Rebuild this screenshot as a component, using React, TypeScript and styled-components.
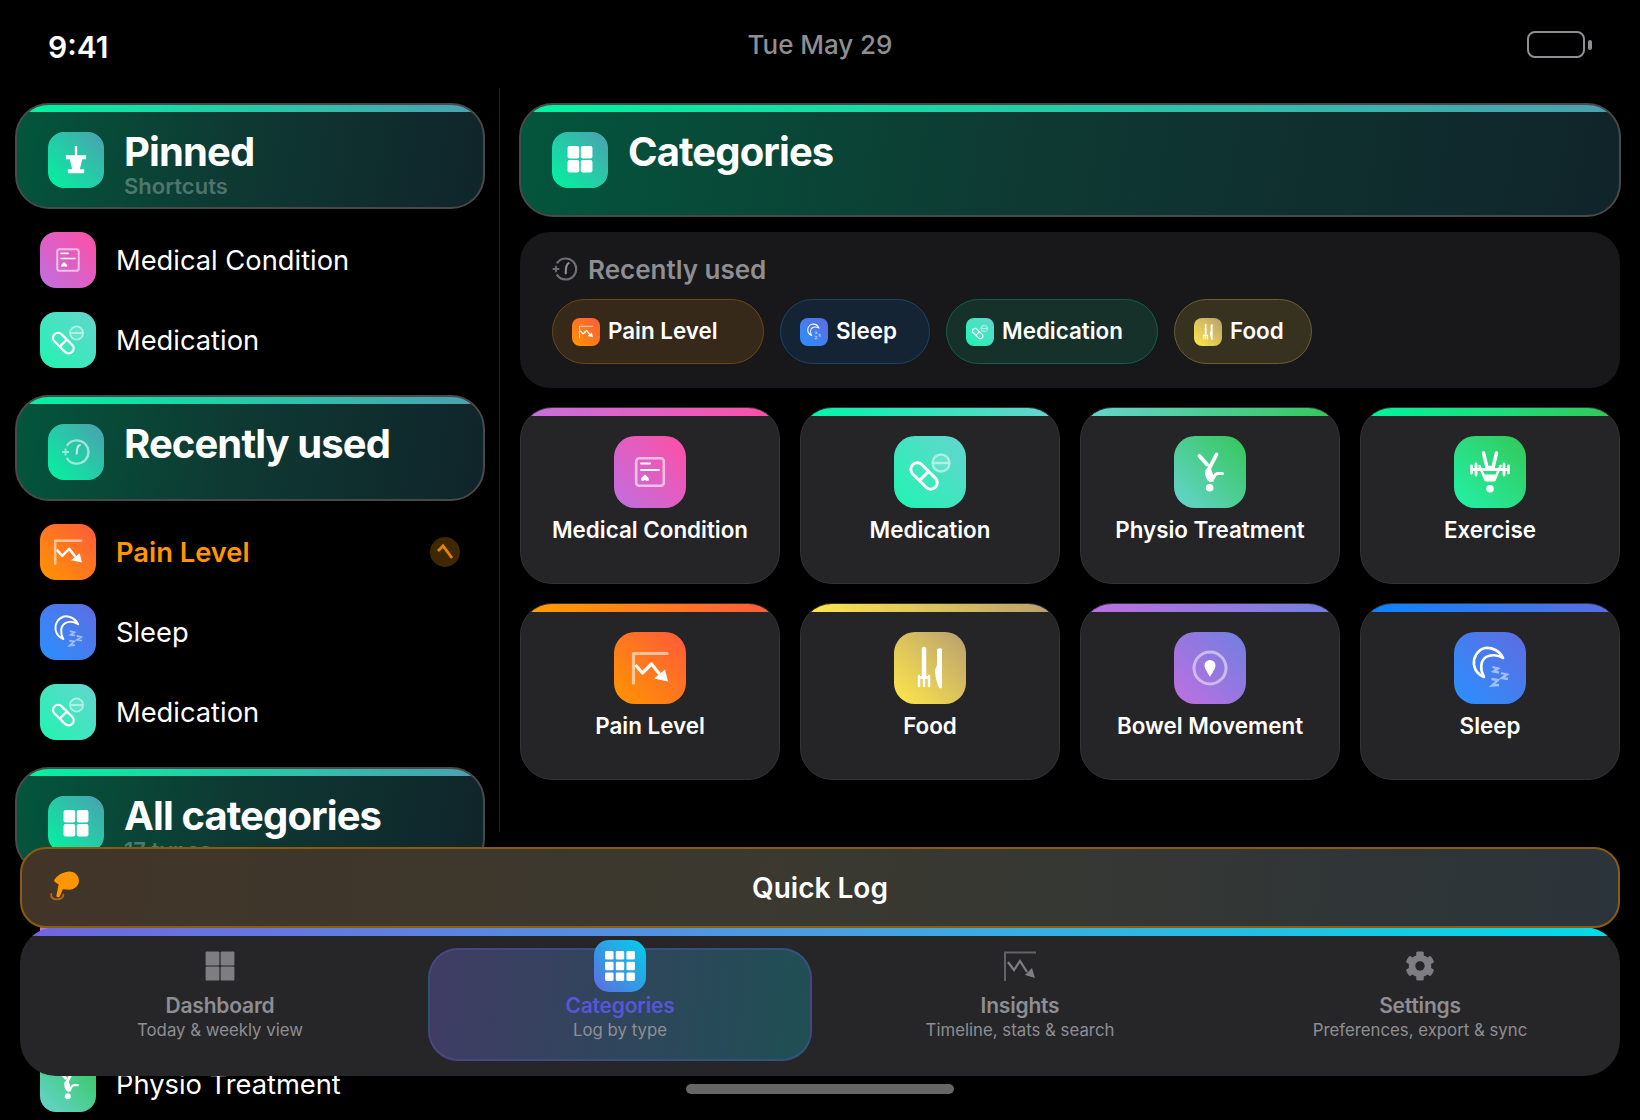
import React from 'react';
import styled, { createGlobalStyle } from 'styled-components';
import { FaCog } from 'react-icons/fa';

const GlobalStyle = createGlobalStyle`
  html, body {
    margin: 0;
    background: #000;
    font-family: Inter, "Noto Sans", sans-serif;
    color: #fff;
  }
  * { box-sizing: border-box; }
`;

const Screen = styled.div`
  position: relative;
  width: 1640px;
  height: 1120px;
  overflow: hidden;
  background: #000;
`;

const StatusBar = styled.div`
  display: grid;
  grid-template-columns: 1fr auto 1fr;
  height: 88px;
  padding: 28px 48px 0 48px;
`;

const Time = styled.div`
  font-size: 30px;
  line-height: 34px;
  font-weight: 600;
  margin-top: 2px;
`;

const DateText = styled.div`
  font-size: 26px;
  line-height: 34px;
  font-weight: 500;
  letter-spacing: -0.05px;
  color: #8e8e93;
`;

const Battery = styled.div`
  justify-self: end;
  display: flex;
  align-items: center;
  gap: 3px;
  height: 27px;
  margin-top: 3px;
`;

const BatteryBody = styled.div`
  width: 58px;
  height: 27px;
  border: 2px solid #8e8e93;
  border-radius: 8px;
`;

const BatteryCap = styled.div`
  width: 4px;
  height: 10px;
  border-radius: 2px;
  background: #8e8e93;
`;

const Columns = styled.div`
  display: flex;
  align-items: flex-start;
`;

const Sidebar = styled.div`
  width: 499px;
  flex: none;
  display: flex;
  flex-direction: column;
  gap: 27px;
  padding: 15px 14px 0 15px;
`;

const Section = styled.div`
  display: flex;
  flex-direction: column;
  gap: 24px;
`;

const HeaderCard = styled.div<{ $tall?: boolean }>`
  flex: none;
  display: flex;
  align-items: flex-start;
  gap: 20px;
  height: ${(p) => (p.$tall ? '114px' : '106px')};
  margin-bottom: ${(p) => (p.$tall ? '0' : '-1px')};
  padding: 27px 30px 0 31px;
  border: 2px solid #48494b;
  border-radius: 34px;
  background:
    linear-gradient(90deg, #00f5a0, #4d9fb0) top / 100% 7px no-repeat,
    linear-gradient(100deg, #03563c 0%, #0e3a33 45%, #10242a 100%);
`;

const HeaderText = styled.div`
  margin-top: -4px;
`;

const HeaderTitle = styled.div`
  font-size: 40px;
  line-height: 48px;
  font-weight: 700;
  letter-spacing: -0.9px;
`;

const HeaderSub = styled.div`
  margin-top: -4px;
  font-size: 22px;
  line-height: 28px;
  font-weight: 600;
  color: rgba(255, 255, 255, 0.28);
`;

const Row = styled.div`
  display: flex;
  align-items: center;
  gap: 20px;
  height: 56px;
  padding: 0 25px;
`;

const RowLabel = styled.div<{ $active?: boolean }>`
  flex: 1;
  font-size: 27.3px;
  font-weight: ${(p) => (p.$active ? 600 : 400)};
  color: ${(p) => (p.$active ? '#ff9500' : '#fff')};
`;

const SortBadge = styled.div`
  width: 30px;
  height: 30px;
  border-radius: 50%;
  background: #3f2800;
  filter: blur(0.4px);
`;

const Tile = styled.div<{ $size: number; $from: string; $to: string }>`
  flex: none;
  width: ${(p) => p.$size}px;
  height: ${(p) => p.$size}px;
  border-radius: ${(p) => Math.round(p.$size * 0.29)}px;
  background: linear-gradient(45deg, ${(p) => p.$from}, ${(p) => p.$to});
`;

const Main = styled.div`
  flex: 1;
  height: 744px;
  display: flex;
  flex-direction: column;
  padding: 15px 20px 0;
  border-left: 1px solid #1f1f21;
`;

const MainHeaderWrap = styled.div`
  display: flex;
  flex-direction: column;
  margin: 0 -1px;
`;

const RecentCard = styled.div`
  margin: 15px 0 19px;
  height: 156px;
  padding: 20px 32px 0;
  border-radius: 30px;
  background: #18181a;
`;

const RecentTitle = styled.div`
  display: flex;
  align-items: center;
  gap: 10px;
  height: 34px;
  font-size: 26px;
  font-weight: 600;
  color: #8e8e93;
`;

const ChipRow = styled.div`
  display: flex;
  gap: 16px;
  margin-top: 13px;
`;

const Chip = styled.div<{ $width: number; $bg: string; $line: string }>`
  display: flex;
  align-items: center;
  gap: 8px;
  width: ${(p) => p.$width}px;
  height: 65px;
  padding-left: 19px;
  border: 1.5px solid ${(p) => p.$line};
  border-radius: 33px;
  background: ${(p) => p.$bg};
`;

const ChipText = styled.span`
  margin-top: -3px;
  font-size: 22.4px;
  font-weight: 600;
`;

const Grid = styled.div`
  display: grid;
  grid-template-columns: repeat(4, 260px);
  grid-auto-rows: 177px;
  gap: 19px 20px;
`;

const Card = styled.div<{ $from: string; $to: string }>`
  display: flex;
  flex-direction: column;
  align-items: center;
  padding-top: 28px;
  border: 1px solid #343436;
  border-radius: 32px;
  background:
    linear-gradient(90deg, ${(p) => p.$from}, ${(p) => p.$to}) top / 100% 8px no-repeat,
    #252527;
`;

const CardLabel = styled.div`
  margin-top: 7px;
  font-size: 22.4px;
  line-height: 30px;
  font-weight: 600;
`;

const Dock = styled.div`
  position: absolute;
  left: 20px;
  right: 20px;
  top: 847px;
  display: flex;
  flex-direction: column;
`;

const QuickLog = styled.div`
  position: relative;
  z-index: 1;
  display: grid;
  grid-template-columns: 1fr auto 1fr;
  align-items: center;
  height: 81px;
  padding: 0 28px;
  border: 2px solid #8a5c12;
  border-radius: 26px;
  background: linear-gradient(95deg, #423528, #3a3930 50%, #2b343a);
  font-size: 28px;
  font-weight: 600;
`;

const HandSvg = styled.svg`
  margin: -5px 0 0 -1px;
`;

const TabBar = styled.div`
  display: grid;
  grid-template-columns: repeat(4, 1fr);
  height: 149px;
  margin-top: -1px;
  padding: 21px 0 15px;
  border-radius: 36px;
  background:
    linear-gradient(90deg, #6f66e0, #4a9ee0 50%, #00dcea) top / 100% 9px no-repeat,
    #262628;
`;

const Tab = styled.div<{ $active?: boolean }>`
  display: flex;
  flex-direction: column;
  align-items: center;
  margin: 0 8px;
  border-radius: 30px;
  border: 2px solid ${(p) => (p.$active ? 'rgba(92, 92, 210, 0.3)' : 'transparent')};
  background: ${(p) => (p.$active ? 'linear-gradient(95deg, #403c64, #1f4f54)' : 'none')};
`;

const TabIconSlot = styled.div`
  display: flex;
  align-items: center;
  justify-content: center;
  height: 31px;
  color: #7d7d82;
  filter: blur(0.5px);
`;

const ActiveIconSlot = styled(TabIconSlot)`
  filter: none;
`;

const TabLabel = styled.div<{ $active?: boolean }>`
  margin-top: 11px;
  font-size: 21px;
  line-height: 27px;
  font-weight: 600;
  letter-spacing: -0.2px;
  color: ${(p) => (p.$active ? '#5856d6' : '#8e8e93')};
`;

const TabSub = styled.div`
  font-size: 16.8px;
  line-height: 22px;
  color: #8e8e93;
`;

const ActiveTabIcon = styled.div`
  width: 52px;
  height: 52px;
  display: flex;
  align-items: center;
  justify-content: center;
  border-radius: 15px;
  background: linear-gradient(45deg, #5e6ce0, #00d0ea);
`;

const HomeBar = styled.div`
  align-self: center;
  width: 268px;
  height: 10px;
  margin-top: 8px;
  border-radius: 5px;
  background: #666;
`;

// all glyphs are drawn in a 72 box and scale with the tile
const G = ({ children }: { children: React.ReactNode }) => (
  <svg viewBox="0 0 72 72" width="100%" height="100%" fill="none" stroke="none">
    {children}
  </svg>
);

const glyphs: Record<string, React.ReactNode> = {
  medical: (
    <G>
      <rect x="22.2" y="22.2" width="27.6" height="27.6" rx="3" stroke="#fff" strokeOpacity=".6" strokeWidth="2.6" />
      <path d="M27 27.5h9M27 34h18" stroke="#fff" strokeWidth="2" strokeLinecap="round" />
      <path d="M31 38.5c2 2 4 3 4 5 0 1.500-2 2-3 1l-1-.5-1 .5c-1 1-3 .5-3-1 0-2 2-3 4-5z" fill="#fff" />
    </G>
  ),
  medication: (
    <G>
      <g transform="rotate(45 30 40)">
        <rect x="14" y="33.500" width="32" height="13" rx="6.500" stroke="#fff" strokeWidth="3" />
        <path d="M30 33.500v13" stroke="#fff" strokeWidth="3" />
      </g>
      <circle cx="47" cy="27" r="8.500" stroke="#fff" strokeOpacity=".5" strokeWidth="2.500" fill="#fff" fillOpacity=".12" />
      <path d="M39.500 27h15" stroke="#fff" strokeOpacity=".5" strokeWidth="2.500" />
    </G>
  ),
  physio: (
    <G>
      <path d="M25.500 20l7.500 8.500M42.500 18.500L34.500 34" stroke="#fff" strokeWidth="3.800" strokeLinecap="round" />
      <path d="M32 34.500c-.5 4 .500 8 3.500 10.500h3.500c0-3-1-9-4-14z" fill="#fff" stroke="#fff" strokeWidth="1.500" strokeLinejoin="round" />
      <path d="M39.500 42c1-3 2-4 4-4.500h5" stroke="#fff" strokeWidth="3" strokeLinecap="round" />
      <circle cx="35.700" cy="51.700" r="3.800" fill="#fff" />
    </G>
  ),
  exercise: (
    <G>
      <path d="M29.500 17l3.500 14.500h6L42.500 17" stroke="#fff" strokeWidth="3.500" strokeLinecap="round" strokeLinejoin="round" />
      <path d="M17 33.500h38" stroke="#fff" strokeWidth="2.800" />
      <path d="M17.500 30v7M22 28v11M50 28v11M54.500 30v7" stroke="#fff" strokeWidth="2.800" strokeLinecap="round" />
      <path d="M25.500 30l6 14M46.500 30l-6 14" stroke="#fff" strokeWidth="2.500" strokeLinecap="round" />
      <path d="M30 38.500h12l-2 7h-8z" fill="#fff" />
      <circle cx="36" cy="52.700" r="3.800" fill="#fff" />
    </G>
  ),
  pain: (
    <G>
      <path d="M19.500 51V21.500H53" stroke="#fff" strokeOpacity=".55" strokeWidth="3.200" strokeLinecap="round" strokeLinejoin="round" />
      <path d="M21.500 33l7 8 9-9 8 10" stroke="#fff" strokeWidth="3.200" strokeLinejoin="round" />
      <path d="M54 49.500l-14-3 11-9z" fill="#fff" />
    </G>
  ),
  food: (
    <G>
      <path d="M30 17v28" stroke="#fff" strokeWidth="4.500" strokeLinecap="round" />
      <path d="M25 44v10M30 44v10M35 44v10" stroke="#fff" strokeWidth="2.500" strokeLinecap="round" />
      <path d="M25 44c0 3 10 3 10 0" fill="#fff" stroke="#fff" strokeWidth="2" />
      <path d="M44.500 16.500c1.500-.5 3-.5 3.500 1V55c0 1.500-2 2-3 .5-2-4-4-12-4-17 0-2 2-4 2-6V18c0-.8.700-1.300 1.500-1.500z" fill="#fff" />
    </G>
  ),
  bowel: (
    <G>
      <circle cx="36" cy="36" r="16" stroke="#fff" strokeOpacity=".5" strokeWidth="3" />
      <path d="M36 45c-2-4-5.500-8-5.500-11.500a5.500 5.500 0 0 1 11 0C41.500 37 38 41 36 45z" fill="#fff" />
    </G>
  ),
  sleep: (
    <G>
      <path d="M49 26c-3-7-11-11-18-10-8 2-12 10-11 17 1 6 5 10 10 12-4-7-4-16 2-20 5-3 12-2 17 1z" stroke="#fff" strokeWidth="2.600" strokeLinejoin="round" />
      <path d="M38.500 35l5.500 1.500-4.500 3 5.500 1M47 41l6 1.500-5 3.500 6 1M37.500 47l6.500 1-6 5.500 7-.5" stroke="#fff" strokeOpacity=".5" strokeWidth="2.300" />
    </G>
  ),
  pin: (
    <G>
      <path d="M34.500 18h3v12h-3zM23 30h26v5H23zM28 35h16l-3 13H31zM25.500 48h21v5h-21z" fill="#fff" />
    </G>
  ),
  history: (
    <G>
      <circle cx="37" cy="36" r="15" stroke="#fff" strokeOpacity=".55" strokeWidth="3" strokeDasharray="78 16" strokeDashoffset="-55" />
      <path d="M18 36h9M22.500 31.500v9" stroke="#fff" strokeOpacity=".55" strokeWidth="2.500" />
      <path d="M41 27c-3 1-4 4-4 11" stroke="#fff" strokeOpacity=".7" strokeWidth="2.800" strokeLinecap="round" />
    </G>
  ),
  grid: (
    <G>
      <rect x="20" y="18" width="15" height="16" rx="2.500" fill="#fff" />
      <rect x="37" y="18" width="15" height="16" rx="2.500" fill="#fff" />
      <rect x="20" y="36" width="15" height="16" rx="2.500" fill="#fff" />
      <rect x="37" y="36" width="15" height="16" rx="2.500" fill="#fff" />
    </G>
  ),
};

const colors: Record<string, [string, string]> = {
  medical: ['#bf6fe0', '#ff4fa5'],
  medication: ['#1ff5b0', '#66d4cf'],
  physio: ['#66d4cf', '#34c759'],
  exercise: ['#22f2a8', '#34c759'],
  pain: ['#ff9500', '#ff5a3c'],
  food: ['#ffe84a', '#b89f70'],
  bowel: ['#bf6fe0', '#6f7fe0'],
  sleep: ['#2a90ff', '#5e6ce0'],
  header: ['#00f5a0', '#4d9fb0'],
};

const AppTile = ({ kind, size, tone }: { kind: string; size: number; tone?: string }) => {
  const [from, to] = colors[tone || kind];
  return (
    <Tile $size={size} $from={from} $to={to}>
      {glyphs[kind]}
    </Tile>
  );
};

const GridGlyph = ({ size, count, color, inset }: { size: number; count: number; color: string; inset: number }) => {
  const cell = 100 / count;
  const cells = [];
  for (let r = 0; r < count; r++) {
    for (let c = 0; c < count; c++) {
      cells.push(
        <rect
          key={`${r}${c}`}
          x={c * cell + inset}
          y={r * cell + inset}
          width={cell - inset * 2}
          height={cell - inset * 2}
          rx="4"
          fill={color}
        />
      );
    }
  }
  return (
    <svg width={size} height={size} viewBox="0 0 100 100">
      {cells}
    </svg>
  );
};

const HandIcon = () => (
  <HandSvg width="32" height="32" viewBox="0 0 30 30" fill="none">
    <path
      d="M5 10c3-4 7-7 13-7.500 6-.5 10 3.500 10 8.500s-4 8-9 8.500l-6-.5-3 7c-1 1-3.500.5-3-1.500l2-10-3-2c-1-1-1.500-2-1-2.500z"
      fill="#ff9500"
    />
    <path d="M2 23.500c-.5 3 2 5 5.500 5s6-2 6-4.500" stroke="#ff9500" strokeOpacity=".55" strokeWidth="1.800" strokeLinecap="round" />
  </HandSvg>
);

const InsightsIcon = () => (
  <svg width="32" height="30" viewBox="0 0 32 30" fill="none">
    <path d="M1 30V1.500h31" stroke="#7d7d82" strokeOpacity=".7" strokeWidth="2" />
    <path d="M4 11l6 8 6-9 7 11" stroke="#7d7d82" strokeWidth="2.200" />
    <path d="M31 27l-10-3 7-7z" fill="#7d7d82" />
  </svg>
);

const sections = [
  {
    title: 'Pinned',
    sub: 'Shortcuts',
    icon: 'pin',
    rows: [
      { kind: 'medical', label: 'Medical Condition' },
      { kind: 'medication', label: 'Medication' },
    ],
  },
  {
    title: 'Recently used',
    icon: 'history',
    rows: [
      { kind: 'pain', label: 'Pain Level', active: true },
      { kind: 'sleep', label: 'Sleep' },
      { kind: 'medication', label: 'Medication' },
    ],
  },
  {
    title: 'All categories',
    sub: '17 types',
    icon: 'grid',
    rows: [
      { kind: 'medical', label: 'Medical Condition' },
      { kind: 'medication', label: 'Medication' },
      { kind: 'physio', label: 'Physio Treatment' },
    ],
  },
];

const chips = [
  { kind: 'pain', label: 'Pain Level', width: 212, bg: '#36291a', line: '#6a4a14' },
  { kind: 'sleep', label: 'Sleep', width: 150, bg: '#152435', line: '#1a4468' },
  { kind: 'medication', label: 'Medication', width: 212, bg: '#16302a', line: '#0f6048' },
  { kind: 'food', label: 'Food', width: 138, bg: '#36321f', line: '#6a6030' },
];

const cards = [
  { kind: 'medical', label: 'Medical Condition', from: '#c770e0', to: '#ff4fa5' },
  { kind: 'medication', label: 'Medication', from: '#00f5a8', to: '#66d4cf' },
  { kind: 'physio', label: 'Physio Treatment', from: '#66d4cf', to: '#34c759' },
  { kind: 'exercise', label: 'Exercise', from: '#00f5a0', to: '#34c759' },
  { kind: 'pain', label: 'Pain Level', from: '#ff9f00', to: '#ff5a3c' },
  { kind: 'food', label: 'Food', from: '#ffe84a', to: '#b89f70' },
  { kind: 'bowel', label: 'Bowel Movement', from: '#bf6fe0', to: '#6f7fe0' },
  { kind: 'sleep', label: 'Sleep', from: '#0a84ff', to: '#5e6ce0' },
];

const App: React.FC = () => {
  return (
    <Screen>
      <GlobalStyle />
      <StatusBar>
        <Time>9:41</Time>
        <DateText>Tue May 29</DateText>
        <Battery>
          <BatteryBody />
          <BatteryCap />
        </Battery>
      </StatusBar>

      <Columns>
        <Sidebar>
          {sections.map((section) => (
            <Section key={section.title}>
              <HeaderCard>
                <AppTile kind={section.icon} size={56} tone="header" />
                <HeaderText>
                  <HeaderTitle>{section.title}</HeaderTitle>
                  {section.sub && <HeaderSub>{section.sub}</HeaderSub>}
                </HeaderText>
              </HeaderCard>
              {section.rows.map((row, i) => (
                <Row key={i}>
                  <AppTile kind={row.kind} size={56} />
                  <RowLabel $active={row.active}>{row.label}</RowLabel>
                  {row.active && (
                    <SortBadge>
                      <svg width="30" height="30" viewBox="0 0 30 30" fill="none">
                        <path d="M8 14l5-5 9 12" stroke="#ff9500" strokeOpacity=".85" strokeWidth="2.800" />
                      </svg>
                    </SortBadge>
                  )}
                </Row>
              ))}
            </Section>
          ))}
        </Sidebar>

        <Main>
          <MainHeaderWrap>
            <HeaderCard $tall>
              <AppTile kind="grid" size={56} tone="header" />
              <HeaderText>
                <HeaderTitle>Categories</HeaderTitle>
              </HeaderText>
            </HeaderCard>
          </MainHeaderWrap>

          <RecentCard>
            <RecentTitle>
              <svg width="26" height="26" viewBox="0 0 72 72" fill="none">
                <circle cx="38" cy="36" r="29" stroke="#6e6e73" strokeWidth="6" strokeDasharray="150 32" strokeDashoffset="-107" />
                <path d="M2 36h18M11 27v18" stroke="#6e6e73" strokeWidth="5" />
                <path d="M46 20c-6 2-8 8-8 28" stroke="#8e8e93" strokeWidth="6" strokeLinecap="round" />
              </svg>
              Recently used
            </RecentTitle>
            <ChipRow>
              {chips.map((chip) => (
                <Chip key={chip.label} $width={chip.width} $bg={chip.bg} $line={chip.line}>
                  <AppTile kind={chip.kind} size={28} />
                  <ChipText>{chip.label}</ChipText>
                </Chip>
              ))}
            </ChipRow>
          </RecentCard>

          <Grid>
            {cards.map((card) => (
              <Card key={card.label} $from={card.from} $to={card.to}>
                <AppTile kind={card.kind} size={72} />
                <CardLabel>{card.label}</CardLabel>
              </Card>
            ))}
          </Grid>
        </Main>
      </Columns>

      <Dock>
        <QuickLog>
          <HandIcon />
          <span>Quick Log</span>
          <span />
        </QuickLog>
        <TabBar>
          <Tab>
            <TabIconSlot>
              <GridGlyph size={30} count={2} color="#7d7d82" inset={2} />
            </TabIconSlot>
            <TabLabel>Dashboard</TabLabel>
            <TabSub>Today &amp; weekly view</TabSub>
          </Tab>
          <Tab $active>
            <ActiveIconSlot>
              <ActiveTabIcon>
                <GridGlyph size={32} count={3} color="#fff" inset={3.5} />
              </ActiveTabIcon>
            </ActiveIconSlot>
            <TabLabel $active>Categories</TabLabel>
            <TabSub>Log by type</TabSub>
          </Tab>
          <Tab>
            <TabIconSlot>
              <InsightsIcon />
            </TabIconSlot>
            <TabLabel>Insights</TabLabel>
            <TabSub>Timeline, stats &amp; search</TabSub>
          </Tab>
          <Tab>
            <TabIconSlot>
              <FaCog size={30} />
            </TabIconSlot>
            <TabLabel>Settings</TabLabel>
            <TabSub>Preferences, export &amp; sync</TabSub>
          </Tab>
        </TabBar>
        <HomeBar />
      </Dock>
    </Screen>
  );
};

export default App;
